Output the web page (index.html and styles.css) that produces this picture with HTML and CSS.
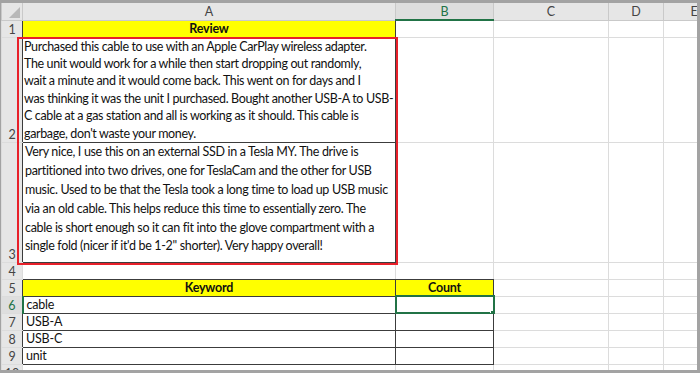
FILE: index.html
```html
<!DOCTYPE html>
<html lang="en">
<head>
    <meta charset="UTF-8">
    <title>Review keywords</title>
    <link rel="stylesheet" href="styles.css">
</head>
<body>
    <div class="frame">
        <table class="grid">
            <colgroup>
                <col class="col-hdr">
                <col class="col-a">
                <col class="col-b">
                <col class="col-c">
                <col class="col-d">
                <col class="col-e">
            </colgroup>
            <thead>
                <tr class="col-heads">
                    <th class="corner"><span class="tri"></span></th>
                    <th>A</th>
                    <th class="active">B</th>
                    <th>C</th>
                    <th>D</th>
                    <th>E</th>
                </tr>
            </thead>
            <tbody>
                <tr class="row-std">
                    <th class="row-num dark-edge">1</th>
                    <td class="box head yellow">Review</td>
                    <td></td><td></td><td></td><td></td>
                </tr>
                <tr class="row-review1">
                    <th class="row-num dark-edge">2</th>
                    <td class="box wrap">Purchased this cable to use with an Apple CarPlay wireless adapter.<br>The unit would work for a while then start dropping out randomly,<br>wait a minute and it would come back. This went on for days and I<br>was thinking it was the unit I purchased. Bought another USB-A to USB-<br>C cable at a gas station and all is working as it should. This cable is<br>garbage, don't waste your money.</td>
                    <td></td><td></td><td></td><td></td>
                </tr>
                <tr class="row-review2">
                    <th class="row-num dark-edge">3</th>
                    <td class="box wrap">Very nice, I use this on an external SSD in a Tesla MY. The drive is partitioned into two drives, one for TeslaCam and the other for USB music. Used to be that the Tesla took a long time to load up USB music via an old cable. This helps reduce this time to essentially zero. The cable is short enough so it can fit into the glove compartment with a single fold (nicer if it'd be 1-2" shorter). Very happy overall!</td>
                    <td></td><td></td><td></td><td></td>
                </tr>
                <tr class="row-std">
                    <th class="row-num">4</th>
                    <td class="above"></td>
                    <td class="above"></td>
                    <td></td><td></td><td></td>
                </tr>
                <tr class="row-std">
                    <th class="row-num dark-edge">5</th>
                    <td class="box head yellow">Keyword</td>
                    <td class="box head yellow">Count</td>
                    <td></td><td></td><td></td>
                </tr>
                <tr class="row-std">
                    <th class="row-num active">6</th>
                    <td class="box">cable</td>
                    <td class="box selected"></td>
                    <td></td><td></td><td></td>
                </tr>
                <tr class="row-std">
                    <th class="row-num dark-edge">7</th>
                    <td class="box">USB-A</td>
                    <td class="box"></td>
                    <td></td><td></td><td></td>
                </tr>
                <tr class="row-std">
                    <th class="row-num dark-edge">8</th>
                    <td class="box">USB-C</td>
                    <td class="box"></td>
                    <td></td><td></td><td></td>
                </tr>
                <tr class="row-std">
                    <th class="row-num dark-edge">9</th>
                    <td class="box">unit</td>
                    <td class="box"></td>
                    <td></td><td></td><td></td>
                </tr>
                <tr class="row-std">
                    <th class="row-num">10</th>
                    <td></td><td></td><td></td><td></td><td></td>
                </tr>
            </tbody>
        </table>

        <!-- red highlight drawn over the review cells -->
        <div class="highlight"></div>
    </div>
</body>
</html>
```

FILE: styles.css
```css
body {
    margin: 0;
    background-color: #ffffff;
    font-family: Lato, "Open Sans", sans-serif;
}

.frame {
    position: relative;
    width: 700px;
    height: 373px;
    box-sizing: border-box;
    border: 3px solid #a3a3a3;
    border-left-width: 1px;
    overflow: hidden;
    background-color: #ffffff;
}

.grid {
    border-collapse: collapse;
    table-layout: fixed;
    width: 723px;
    font-size: 12.5px;
    letter-spacing: -0.2px;
    color: #111;
}

.col-hdr { width: 21px; }
.col-a { width: 373px; }
.col-b { width: 98px; }
.col-c { width: 115px; }
.col-d { width: 55px; }
.col-e { width: 61px; }

.grid td,
.grid th {
    padding: 0 3px;
    border: 1px solid #dcdcdc;
    white-space: nowrap;
    overflow: hidden;
    line-height: 15px;
}

/* column letters */
.col-heads th {
    height: 16px;
    background-color: #e6e6e6;
    border-color: #c9c9c9;
    border-top: none;
    color: #444;
    font-weight: normal;
    font-size: 12.5px;
    letter-spacing: 0;
    text-align: center;
    vertical-align: middle;
}

.col-heads th.active {
    background-color: #dedede;
    color: #217346;
    border-bottom: 2px solid #217346;
}

.corner {
    position: relative;
}

.tri {
    position: absolute;
    right: 2px;
    bottom: 2px;
    width: 0;
    height: 0;
    border-left: 11px solid transparent;
    border-bottom: 11px solid #b8b8b8;
}

/* row numbers */
.row-num {
    background-color: #e6e6e6;
    border-color: #c9c9c9;
    border-left: none;
    color: #444;
    font-weight: normal;
    font-size: 12.5px;
    letter-spacing: 0;
    text-align: center;
    vertical-align: bottom;
}

.grid .row-num {
    padding: 0;
}

.row-num.active {
    background-color: #dedede;
    color: #217346;
    border-right: 2px solid #217346;
}

.row-num.dark-edge {
    border-right-color: #3c3c3c;
}

.row-std { height: 17px; }
.row-review1 { height: 104px; }
.row-review2 { height: 120px; }

.grid td.box {
    border-color: #3c3c3c;
}

.grid td.above {
    border-bottom-color: #3c3c3c;
}

.head {
    font-weight: bold;
    text-align: center;
}

.yellow {
    background-color: #ffff00;
}

.grid td.wrap {
    white-space: normal;
    vertical-align: top;
    padding: 0 0 0 2px;
    letter-spacing: -0.33px;
}

/* review 1 keeps the line ends it has in the sheet */
.grid .row-review1 .wrap {
    white-space: nowrap;
    overflow: visible;
    padding-left: 1px;
    line-height: 17.4px;
    letter-spacing: -0.36px;
}

.row-review2 .wrap {
    padding-top: 2px;
    line-height: 18.9px;
}

.grid td.selected {
    position: relative;
    outline: 2px solid #217346;
    outline-offset: -1px;
}

.selected::after {
    content: "";
    position: absolute;
    right: -4px;
    bottom: -4px;
    width: 5px;
    height: 5px;
    background-color: #217346;
    border: 1px solid #ffffff;
}

.highlight {
    position: absolute;
    left: 16px;
    top: 34px;
    width: 381px;
    height: 228px;
    box-sizing: border-box;
    border: 2px solid #e8202a;
    pointer-events: none;
}
```
